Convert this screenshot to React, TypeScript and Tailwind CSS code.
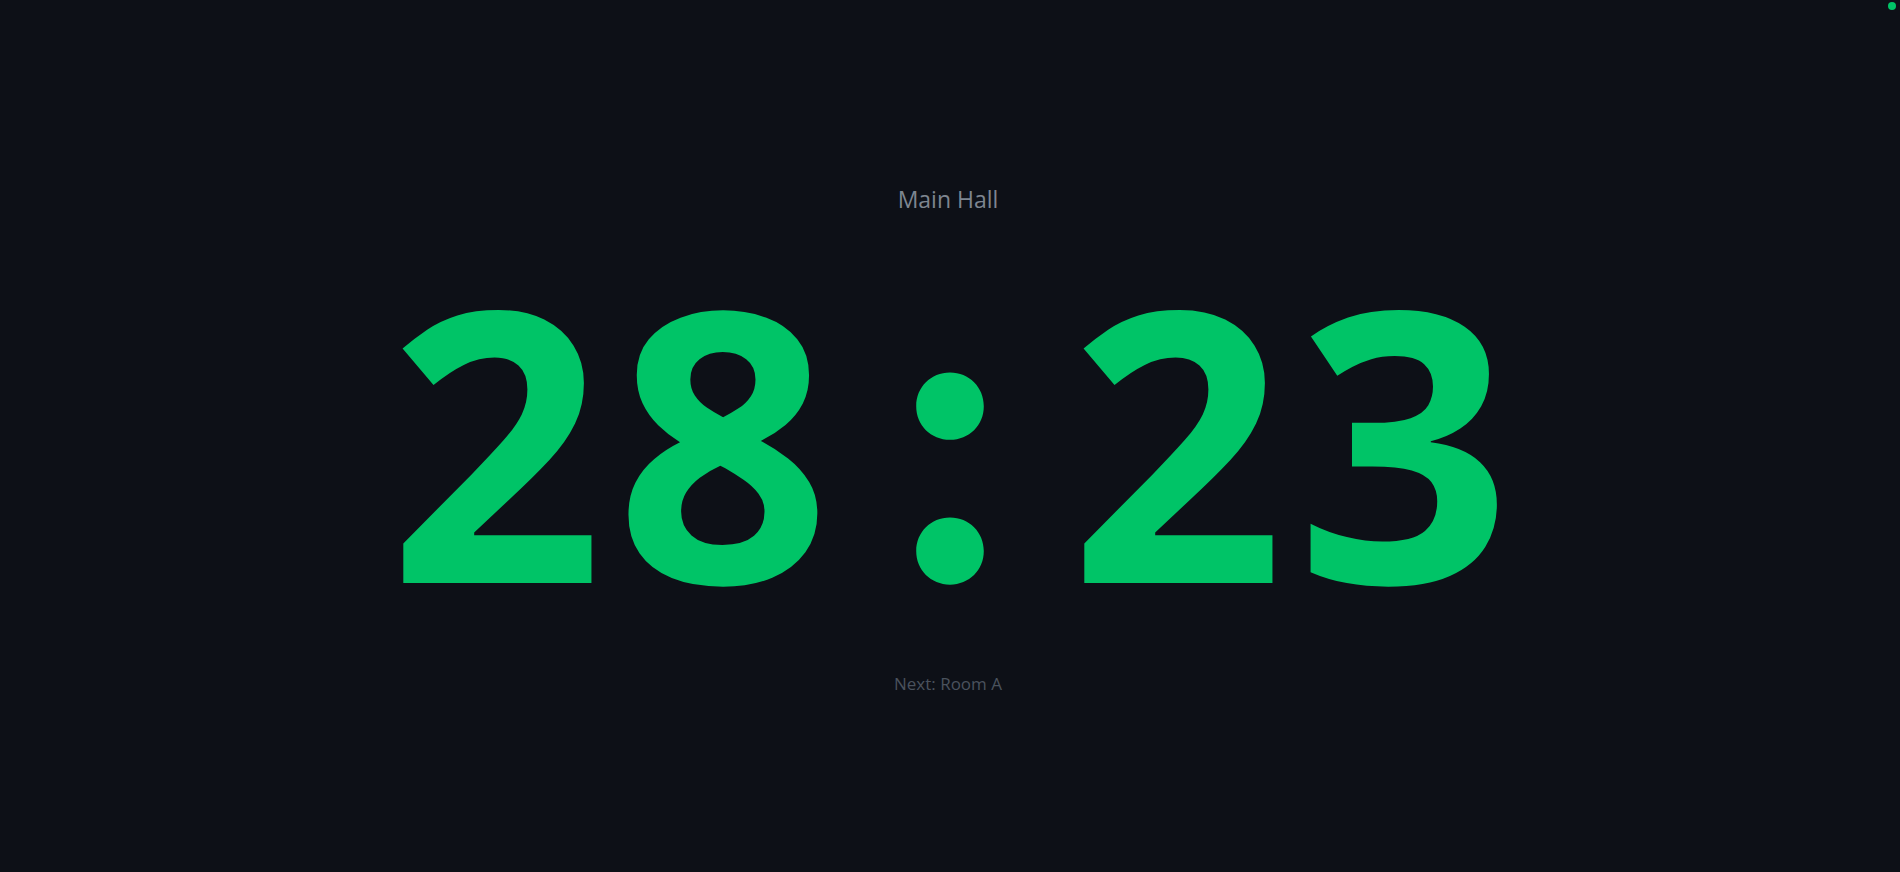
export default function App() {
  const time = "28:23"

  return (
    <div className="relative h-screen w-full bg-[#0d1017] flex flex-col items-center justify-center pt-[9px] font-['Open_Sans',sans-serif] overflow-hidden">
      <span className="absolute top-0.5 right-1 w-2 h-2 rounded-full bg-[#00c467]" />

      <div className="text-[23px] leading-8 text-[#7d8590] mb-[33px] pr-1">Main Hall</div>

      <div className="flex items-start font-bold text-[#00c467]">
        {time.split("").map((ch, i) =>
          ch === ":" ? (
            <span
              key={i}
              className="w-[227px] h-[377px] text-center text-[400px] leading-[374px] font-['Inter',sans-serif]"
            >
              {ch}
            </span>
          ) : (
            <span key={i} className="w-[227px] text-center text-[377px] leading-none">
              {ch}
            </span>
          )
        )}
      </div>

      <div className="text-[17px] leading-7 text-[#4a525d] mt-[45px] pr-1">Next: Room A</div>
    </div>
  )
}
